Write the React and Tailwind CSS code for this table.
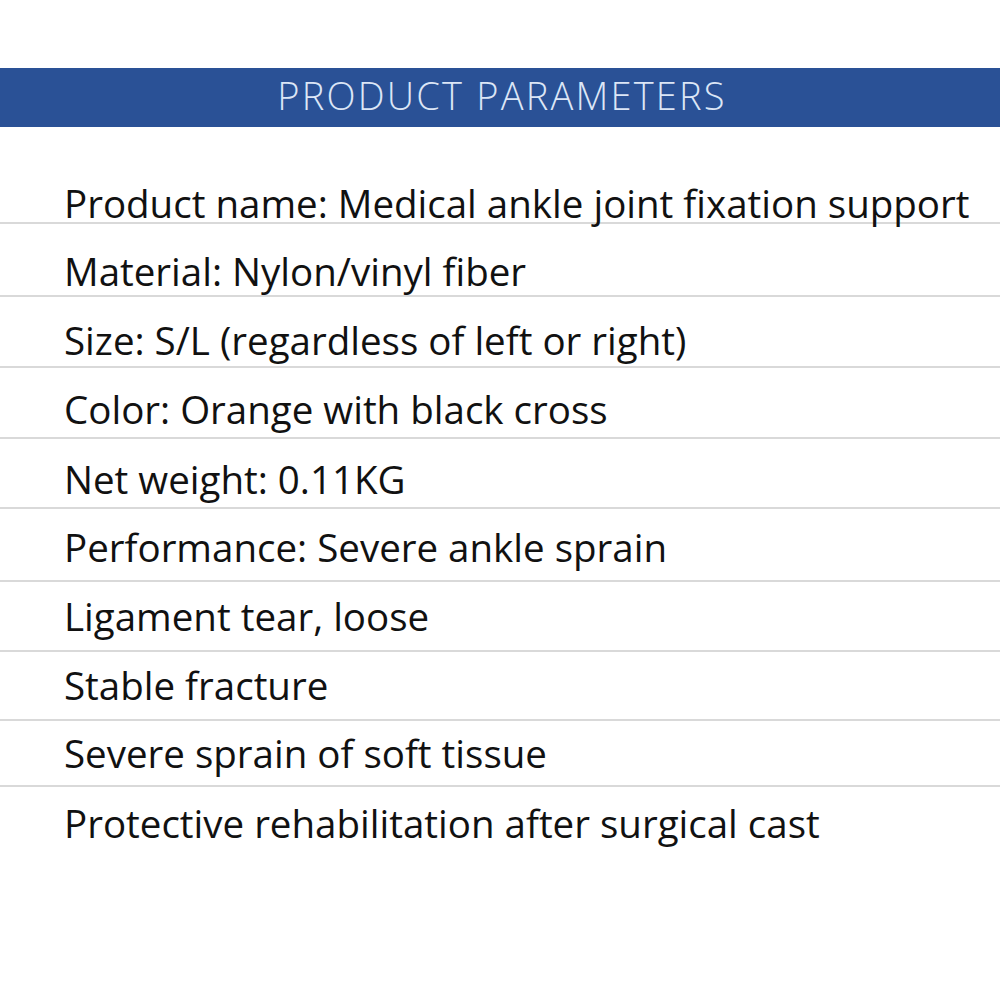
import React from "react";

const rows = [
  { text: "Product name: Medical ankle joint fixation support", h: "h-[97px]", pb: "pb-[0px]" },
  { text: "Material: Nylon/vinyl fiber", h: "h-[73px]", pb: "pb-[5px]" },
  { text: "Size: S/L (regardless of left or right)", h: "h-[71px]", pb: "pb-[7px]" },
  { text: "Color: Orange with black cross", h: "h-[71px]", pb: "pb-[9px]" },
  { text: "Net weight: 0.11KG", h: "h-[70px]", pb: "pb-[9px]" },
  { text: "Performance: Severe ankle sprain", h: "h-[73px]", pb: "pb-[14px]" },
  { text: "Ligament tear, loose", h: "h-[70px]", pb: "pb-[15px]" },
  { text: "Stable fracture", h: "h-[69px]", pb: "pb-[15px]" },
  { text: "Severe sprain of soft tissue", h: "h-[66px]", pb: "pb-[13px]" },
];

export default function App() {
  return (
    <div className="w-[1000px] h-[1000px] bg-white overflow-hidden" style={{ fontFamily: '"Open Sans", "Noto Sans", sans-serif' }}>
      <div className="h-[68px]" />
      <div className="h-[59px] bg-[#2a5196] flex items-center justify-center pb-[6px]">
        <span className="text-[38px] font-light text-[#dce6f6] leading-none tracking-[2.2px] pl-[4px]">PRODUCT PARAMETERS</span>
      </div>
      {rows.map((r, i) => (
        <div key={i} className={`${r.h} ${r.pb} border-b-2 border-[#d9d9d9] flex items-end pl-[64px]`}>
          <span className="text-[38.5px] leading-[38px] text-[#111111] whitespace-nowrap">{r.text}</span>
        </div>
      ))}
      <div className="h-[66px] pb-[11px] flex items-end pl-[64px]">
        <span className="text-[38.5px] leading-[38px] text-[#111111] whitespace-nowrap">Protective rehabilitation after surgical cast</span>
      </div>
    </div>
  );
}
